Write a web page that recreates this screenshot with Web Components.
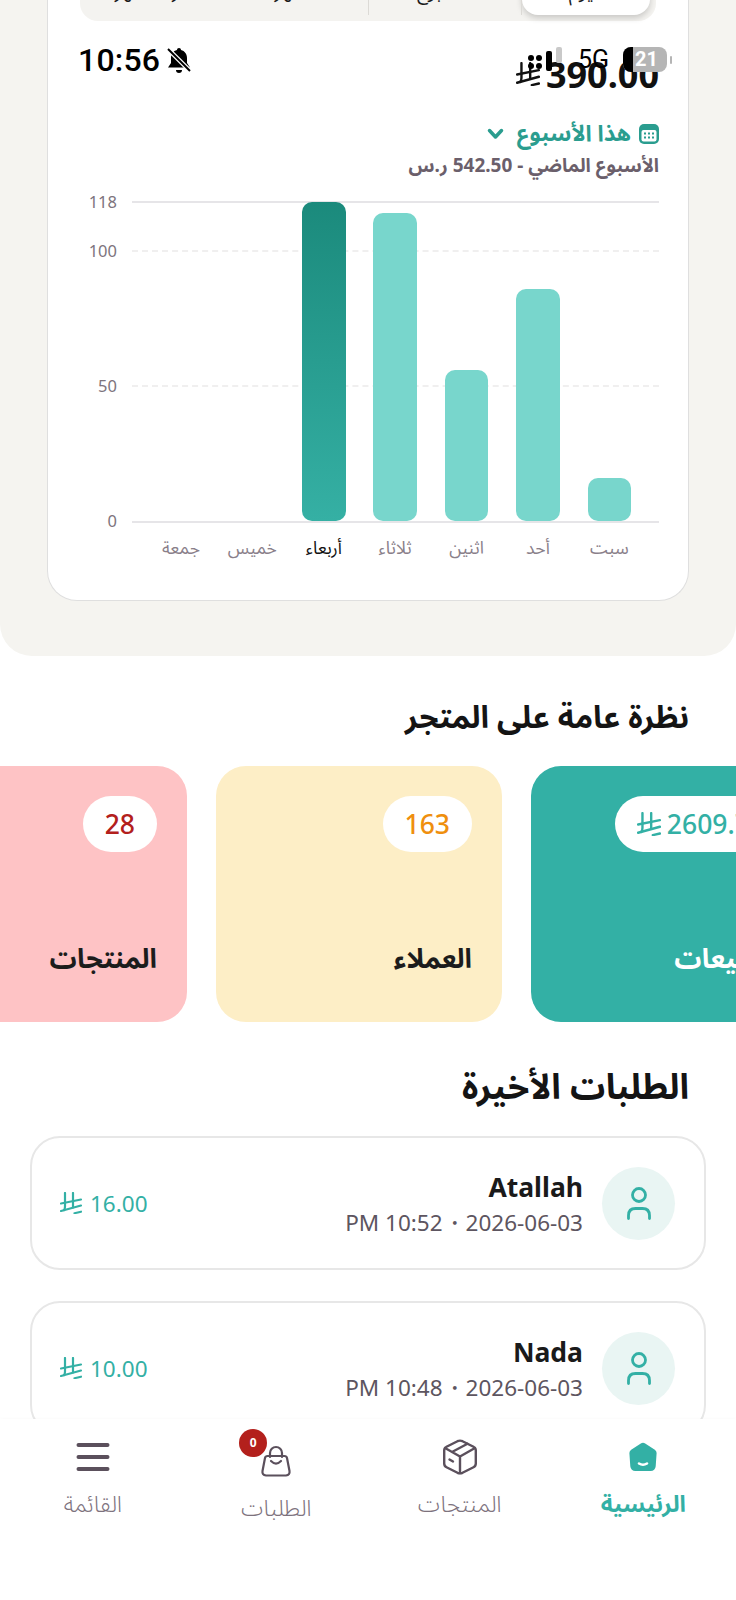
<!DOCTYPE html>
<html lang="ar" dir="rtl">
<head>
<meta charset="utf-8">
<title>لوحة المتجر</title>
<style>
    html, body {
        margin: 0;
        height: 1600px;
        overflow: hidden;
        background: #fff;
        font-family: "Noto Sans", "Noto Sans Arabic", "DejaVu Sans", sans-serif;
    }
</style>
</head>
<body>
<app-screen>
    <status-bar></status-bar>
    <sales-panel amount="390.00" period="هذا الأسبوع" previous="الأسبوع الماضي - 542.50 ر.س">
        <period-tabs slot="tabs"></period-tabs>
        <bar-chart slot="chart">
            <chart-bar value="16" label="سبت"></chart-bar>
            <chart-bar value="86" label="أحد"></chart-bar>
            <chart-bar value="56" label="اثنين"></chart-bar>
            <chart-bar value="114" label="ثلاثاء"></chart-bar>
            <chart-bar value="118" label="أربعاء" active></chart-bar>
            <chart-bar value="0" label="خميس"></chart-bar>
            <chart-bar value="0" label="جمعة"></chart-bar>
        </bar-chart>
    </sales-panel>
    <store-overview>
        <stat-card label="المبيعات" value="2609.75" tone="teal" currency></stat-card>
        <stat-card label="العملاء" value="163" tone="yellow"></stat-card>
        <stat-card label="المنتجات" value="28" tone="pink"></stat-card>
    </store-overview>
    <recent-orders>
        <order-card name="Atallah" when="PM 10:52・2026-06-03" price="16.00"></order-card>
        <order-card name="Nada" when="PM 10:48・2026-06-03" price="10.00"></order-card>
    </recent-orders>
    <bottom-nav>
        <nav-item label="الرئيسية" active>
            <svg width="30" height="30" viewBox="0 0 30 30"><path fill="#33b0a5" d="M12.8 1.4a4 4 0 0 1 4.4 0l9.6 6.3a4 4 0 0 1 1.8 3.6l-.9 13a5 5 0 0 1-5 4.7H7.300a5 5 0 0 1-5-4.700l-.9-13a4 4 0 0 1 1.800-3.600z"/><path fill="none" stroke="#fff" stroke-width="2.600" stroke-linecap="round" d="M11 21.500q4 2.500 8 0"/></svg>
        </nav-item>
        <nav-item label="المنتجات">
            <svg width="34" height="36" viewBox="0 0 34 36" fill="none" stroke="#5b505c" stroke-width="2.400" stroke-linejoin="round" stroke-linecap="round"><path d="M14.500 2.200q2.500-1.200 5 0l11 5.600q2.300 1.200 2.300 3.800v12.800q0 2.600-2.300 3.800l-11 5.600q-2.500 1.200-5 0l-11-5.600q-2.300-1.200-2.300-3.800V11.600q0-2.600 2.300-3.800z"/><path d="M2 9l15 8.500L32 9M17 17.500V34M9 13l15.500-8.300M6.500 20.500l3.500 2"/></svg>
        </nav-item>
        <nav-item label="الطلبات" low>
            <span class="bag" style="position:relative;display:block;width:30px;height:32px">
                <svg width="30" height="32" viewBox="0 0 30 32" fill="none" stroke="#5b505c" stroke-width="2.200" stroke-linecap="round" stroke-linejoin="round"><path d="M9 12V8a6 6 0 0 1 12 0v4"/><path d="M6.500 11h17q2 0 2.500 2l2.500 13q.6 4-3.500 4.500H5Q.9 30 1.500 26L4 13q.5-2 2.500-2z"/><path d="M10 16q5 5 10 0"/></svg>
                <notify-badge count="0"></notify-badge>
            </span>
        </nav-item>
        <nav-item label="القائمة">
            <svg width="34" height="30" viewBox="0 0 34 30" fill="none" stroke="#5b505c" stroke-width="4" stroke-linecap="round"><path d="M2.500 3h29M2.500 15h29M2.500 27h29"/></svg>
        </nav-item>
    </bottom-nav>
</app-screen>

<script>
"use strict";

/**
 * Small helper, every element here has the same constructor otherwise.
 */
function attach(el, html) {
    el.attachShadow({ mode: "open" });
    el.shadowRoot.innerHTML = html;
}

/**
 * The riyal sign, drawn with strokes so it takes the colour of the text.
 */
class RiyalIcon extends HTMLElement {
    connectedCallback() {
        const size = this.getAttribute("size") || "22";
        attach(this, `
            <style>
                :host { display: inline-flex; flex: none; }
            </style>
            <svg width="${size}" height="${size}" viewBox="0 0 22 22" fill="none" stroke="currentColor" stroke-width="2.200" stroke-linecap="round">
                <path d="M5 1v13.500q0 2.500-1 3.700"/>
                <path d="M13 1v14.500"/>
                <path d="M1 11.500 21 7.500"/>
                <path d="M1 19 21 13.500"/>
                <path d="M14.500 21.200 21 19.700"/>
            </svg>
        `);
    }
}
customElements.define("riyal-icon", RiyalIcon);

class AppScreen extends HTMLElement {
    constructor() {
        super();
        attach(this, `
            <style>
                :host {
                    display: block;
                    position: relative;
                    width: 736px;
                    height: 1600px;
                    overflow: hidden;
                    background: #fff;
                }
            </style>
            <slot></slot>
        `);
    }
}
customElements.define("app-screen", AppScreen);

/**
 * The phone's status bar. It floats over the scrolled page.
 */
class StatusBar extends HTMLElement {
    constructor() {
        super();
        attach(this, `
            <style>
                :host {
                    position: absolute;
                    top: 47px;
                    left: 78px;
                    width: 594px;
                    height: 26px;
                    display: flex;
                    direction: ltr;
                    align-items: center;
                    z-index: 3;
                    color: #000;
                    font-family: Roboto, "Liberation Sans", sans-serif;
                }
                .time { font-size: 32px; font-weight: 500; line-height: 26px; letter-spacing: .2px; }
                .bell { margin-left: 7px; }
                .right { margin-left: auto; display: flex; align-items: flex-start; height: 26px; }
                .dots { display: grid; grid-template-columns: 6px 6px; gap: 2px; margin-top: 8px; }
                .dots i { width: 6px; height: 6px; border-radius: 50%; background: #000; }
                .bar { width: 6px; border-radius: 2px; }
                .g { font-size: 25px; line-height: 16px; margin: 5px 0 0 16px; font-weight: 400; }
                .battery {
                    display: flex;
                    width: 44px;
                    height: 25px;
                    margin-left: 14px;
                    border-radius: 8px;
                    overflow: hidden;
                    background: #b5b5b5;
                    color: #fff;
                    font-size: 20px;
                    font-weight: 700;
                    line-height: 25px;
                }
                .battery b { width: 10px; background: #000; margin-right: 2px; }
                .tip { width: 2px; height: 8px; margin: 9px 0 0 3px; background: #b5b5b5; border-radius: 2px; }
            </style>
            <span class="time">10:56</span>
            <svg class="bell" width="24" height="26" viewBox="0 0 24 26">
                <path d="M12 1c1.200 0 2 .8 2 2 3.800 1 6 4 6 8v5l3 4.500H1L4 16v-5c0-4 2.200-7 6-8 0-1.200.8-2 2-2z"/>
                <path d="M9 23h6a3 3 0 0 1-6 0z"/>
                <path d="M1 2 23 24" stroke="#fff" stroke-width="4.500"/>
                <path d="M1 2 23 24" stroke="#000" stroke-width="2"/>
            </svg>
            <span class="right">
                <span class="dots"><i></i><i></i><i></i><i></i></span>
                <span class="bar" style="height:20px;margin:4px 0 0 4px;background:#000"></span>
                <span class="bar" style="height:16px;margin-left:4px;background:#c9c9c9"></span>
                <span class="g">5G</span>
                <span class="battery"><b></b>21</span>
                <span class="tip"></span>
            </span>
        `);
    }
}
customElements.define("status-bar", StatusBar);

/**
 * The tabs above the total. Only their lower edge is on screen.
 */
class PeriodTabs extends HTMLElement {
    constructor() {
        super();
        attach(this, `
            <style>
                :host {
                    display: grid;
                    grid-template-columns: 128px 153px 145px 1fr;
                    height: 64px;
                    margin: 0 3px 0 0;
                    padding: 0 6px 6px;
                    box-sizing: border-box;
                    background: #f4f3f0;
                    border-radius: 0 0 18px 18px;
                    font-size: 19px;
                    color: #1b1b1b;
                    text-align: center;
                    line-height: 68px;
                }
                div { border-inline-start: 1px solid #dcdad6; height: 58px; overflow: hidden; }
                div:last-child { border: 0; }
                .on {
                    background: #fff;
                    border-radius: 0 0 16px 16px;
                    box-shadow: 0 3px 6px rgba(0, 0, 0, .18);
                    border: 0;
                }
            </style>
            <div class="on">اليوم</div>
            <div>الأسبوع</div>
            <div>الشهر</div>
            <div>آخر 3 أشهر</div>
        `);
    }
}
customElements.define("period-tabs", PeriodTabs);

/**
 * Beige panel with the white sales card, scrolled partly out of view.
 */
class SalesPanel extends HTMLElement {
    connectedCallback() {
        attach(this, `
            <style>
                :host {
                    display: block;
                    margin-top: -43px;
                    padding: 0 47px 55px;
                    background: #f5f4f0;
                    border-radius: 0 0 32px 32px;
                }
                .card {
                    height: 644px;
                    box-sizing: border-box;
                    padding: 0 29px 0 32px;
                    background: #fff;
                    border: 1.5px solid #dfdfdf;
                    border-top: 0;
                    border-radius: 0 0 30px 30px;
                }
                .amount {
                    display: flex;
                    align-items: center;
                    gap: 6px;
                    height: 40px;
                    margin-top: 33px;
                    font-size: 36px;
                    font-weight: 700;
                    color: #111;
                }
                .period {
                    display: flex;
                    align-items: center;
                    gap: 8px;
                    height: 28px;
                    margin-top: 26px;
                    font-size: 22.500px;
                    font-weight: 700;
                    color: #2a9d8f;
                }
                .chevron { margin-right: 5px; }
                .prev {
                    height: 24px;
                    margin-top: 5px;
                    line-height: 24px;
                    font-size: 19px;
                    font-weight: 700;
                    color: #6b5f6b;
                    white-space: nowrap;
                }
                ::slotted(bar-chart) { margin-top: 25px; }
            </style>
            <div class="card">
                <slot name="tabs"></slot>
                <div class="amount">${this.getAttribute("amount")}<riyal-icon size="24"></riyal-icon></div>
                <div class="period">
                    <svg width="20" height="22" viewBox="0 0 20 22">
                        <rect x="0" y="1" width="20" height="20" rx="5" fill="#2a9d8f"/>
                        <rect x="2.500" y="7" width="15" height="11.500" rx="2" fill="#fff"/>
                        <path fill="#2a9d8f" d="M5 9.500h2v2H5zM9 9.500h2v2H9zM13 9.500h2v2h-2zM5 13.500h2v2H5zM9 13.500h2v2H9zM13 13.500h2v2h-2z"/>
                    </svg>
                    <span>${this.getAttribute("period")}</span>
                    <svg class="chevron" width="17" height="12" viewBox="0 0 17 12" fill="none" stroke="#2a9d8f" stroke-width="3.500" stroke-linecap="round" stroke-linejoin="round"><path d="M2.500 2.500 8.500 9l6-6.500"/></svg>
                </div>
                <div class="prev">${this.getAttribute("previous")}</div>
                <slot name="chart"></slot>
            </div>
        `);
    }
}
customElements.define("sales-panel", SalesPanel);

/**
 * Axis, grid lines and the columns of the weekly chart.
 */
class BarChart extends HTMLElement {
    constructor() {
        super();
        attach(this, `
            <style>
                :host { display: block; position: relative; }
                .line { position: absolute; left: 52px; right: 0; height: 0; border-top: 2px solid #e6e5e8; margin-top: -1px; }
                .dash { border-top: 2px dashed #f0efef; }
                .tick {
                    position: absolute;
                    left: 0;
                    width: 37px;
                    height: 20px;
                    margin-top: -10px;
                    direction: ltr;
                    text-align: right;
                    font-size: 16.500px;
                    line-height: 20px;
                    color: #7d747d;
                }
                .cols {
                    position: relative;
                    display: grid;
                    grid-template-columns: repeat(7, 71.400px);
                    margin: 0 14px 0 0;
                }
            </style>
            <div class="line" style="top:0"></div>
            <div class="line dash" style="top:49px"></div>
            <div class="line dash" style="top:184px"></div>
            <div class="line" style="top:320px"></div>
            <span class="tick" style="top:0">118</span>
            <span class="tick" style="top:49px">100</span>
            <span class="tick" style="top:184px">50</span>
            <span class="tick" style="top:319px">0</span>
            <div class="cols"><slot></slot></div>
        `);
    }
}
customElements.define("bar-chart", BarChart);

class ChartBar extends HTMLElement {
    connectedCallback() {
        const value = Number(this.getAttribute("value"));
        attach(this, `
            <style>
                :host {
                    display: grid;
                    grid-template-rows: 319px 39px;
                    justify-items: center;
                }
                .bar {
                    align-self: end;
                    width: 43.500px;
                    height: ${Math.round(value * 2.703)}px;
                    background: #78d6cc;
                    border-radius: 10px;
                }
                :host([active]) .bar { background: linear-gradient(#1b8a7c, #35b0a4); }
                .label {
                    align-self: end;
                    font-size: 17.500px;
                    line-height: 26px;
                    color: #8a7f8a;
                    white-space: nowrap;
                }
                :host([active]) .label { color: #111; }
            </style>
            <div class="bar"></div>
            <div class="label">${this.getAttribute("label")}</div>
        `);
    }
}
customElements.define("chart-bar", ChartBar);

const sectionTitleCss = `
    h2 {
        margin: 0;
        padding: 0 47px;
        font-weight: 700;
        color: #141414;
    }
`;

class StoreOverview extends HTMLElement {
    constructor() {
        super();
        attach(this, `
            <style>
                :host { display: block; }
                ${sectionTitleCss}
                h2 { margin-top: 40px; font-size: 31px; line-height: 40px; }
                .row {
                    display: flex;
                    gap: 29px;
                    margin: 30px -81px 0 0;
                }
            </style>
            <h2>نظرة عامة على المتجر</h2>
            <div class="row"><slot></slot></div>
        `);
    }
}
customElements.define("store-overview", StoreOverview);

class StatCard extends HTMLElement {
    connectedCallback() {
        const currency = this.hasAttribute("currency");
        attach(this, `
            <style>
                :host {
                    flex: none;
                    display: flex;
                    flex-direction: column;
                    align-items: flex-start;
                    justify-content: space-between;
                    width: 286px;
                    height: 256px;
                    box-sizing: border-box;
                    padding: 30px 30px 47px;
                    border-radius: 30px;
                }
                :host([tone="teal"]) { background: #33b0a5; color: #fff; --num: #33b0a5; }
                :host([tone="yellow"]) { background: #fdeec6; color: #1c1c1c; --num: #ef8f0e; }
                :host([tone="pink"]) { background: #fec3c5; color: #1c1c1c; --num: #b3201c; }
                .pill {
                    display: flex;
                    direction: ltr;
                    align-items: center;
                    gap: 6px;
                    height: 56px;
                    padding: 0 22px;
                    background: #fff;
                    border-radius: 28px;
                    color: var(--num);
                    font-size: 26.500px;
                    font-weight: 500;
                }
                .label { font-size: 27px; font-weight: 700; line-height: 34px; }
                :host([tone="teal"]) .label { margin-right: 8px; }
            </style>
            <div class="pill">${currency ? '<riyal-icon size="24"></riyal-icon>' : ""}${this.getAttribute("value")}</div>
            <div class="label">${this.getAttribute("label")}</div>
        `);
    }
}
customElements.define("stat-card", StatCard);

class RecentOrders extends HTMLElement {
    constructor() {
        super();
        attach(this, `
            <style>
                :host { display: block; }
                ${sectionTitleCss}
                h2 { margin-top: 42px; font-size: 35px; line-height: 44px; }
                .list {
                    display: flex;
                    flex-direction: column;
                    gap: 31px;
                    margin-top: 28px;
                    padding: 0 30px;
                }
            </style>
            <h2>الطلبات الأخيرة</h2>
            <div class="list"><slot></slot></div>
        `);
    }
}
customElements.define("recent-orders", RecentOrders);

class OrderCard extends HTMLElement {
    connectedCallback() {
        attach(this, `
            <style>
                :host {
                    display: flex;
                    align-items: center;
                    gap: 19px;
                    height: 134px;
                    box-sizing: border-box;
                    padding: 0 29px 0 28px;
                    border: 2px solid #e7e7e7;
                    border-radius: 30px;
                    background: #fff;
                }
                .avatar {
                    display: flex;
                    align-items: center;
                    justify-content: center;
                    flex: none;
                    width: 73px;
                    height: 73px;
                    border-radius: 50%;
                    background: #e9f5f3;
                }
                .name { font-size: 26.500px; font-weight: 700; line-height: 36px; color: #1a1a1a; }
                .when { direction: ltr; margin-top: 2px; font-size: 22.500px; line-height: 32px; color: #5d5560; white-space: nowrap; }
                .info { padding-top: 2px; text-align: right; }
                .price {
                    display: flex;
                    direction: ltr;
                    align-items: center;
                    gap: 8px;
                    margin-right: auto;
                    font-size: 22.500px;
                    color: #33b0a5;
                }
            </style>
            <div class="avatar">
                <svg width="24" height="33" viewBox="0 0 24 33" fill="none" stroke="#33b0a5" stroke-width="2.800" stroke-linecap="round">
                    <circle cx="12" cy="8" r="6.500"/>
                    <path d="M1.500 31.500v-3q0-7 7-7h7q7 0 7 7v3"/>
                </svg>
            </div>
            <div class="info">
                <div class="name">${this.getAttribute("name")}</div>
                <div class="when">${this.getAttribute("when")}</div>
            </div>
            <div class="price"><riyal-icon size="22"></riyal-icon>${this.getAttribute("price")}</div>
        `);
    }
}
customElements.define("order-card", OrderCard);

class BottomNav extends HTMLElement {
    constructor() {
        super();
        attach(this, `
            <style>
                :host {
                    position: absolute;
                    left: 0;
                    right: 0;
                    bottom: 0;
                    height: 181px;
                    display: grid;
                    grid-template-columns: repeat(4, 1fr);
                    padding: 0 1px;
                    box-sizing: border-box;
                    background: #fff;
                    box-shadow: 0 -1px 3px rgba(0, 0, 0, .02);
                    z-index: 2;
                }
            </style>
            <slot></slot>
        `);
    }
}
customElements.define("bottom-nav", BottomNav);

class NavItem extends HTMLElement {
    connectedCallback() {
        attach(this, `
            <style>
                :host {
                    display: flex;
                    flex-direction: column;
                    align-items: center;
                    padding-top: 20px;
                    color: #7d727d;
                    font-weight: 300;
                }
                :host([active]) { color: #33b0a5; font-weight: 700; }
                :host([low]) { padding-top: 24px; }
                .icon { display: flex; align-items: center; justify-content: center; height: 36px; }
                .label { margin-top: 13px; font-size: 23px; line-height: 30px; white-space: nowrap; }
            </style>
            <div class="icon"><slot></slot></div>
            <div class="label">${this.getAttribute("label")}</div>
        `);
    }
}
customElements.define("nav-item", NavItem);

class NotifyBadge extends HTMLElement {
    connectedCallback() {
        attach(this, `
            <style>
                :host {
                    position: absolute;
                    top: -16px;
                    left: -22px;
                    width: 28px;
                    height: 28px;
                    border-radius: 50%;
                    background: #b3201c;
                    color: #fff;
                    font-size: 12px;
                    font-weight: 700;
                    line-height: 28px;
                    text-align: center;
                }
            </style>
            ${this.getAttribute("count")}
        `);
    }
}
customElements.define("notify-badge", NotifyBadge);
</script>
</body>
</html>
